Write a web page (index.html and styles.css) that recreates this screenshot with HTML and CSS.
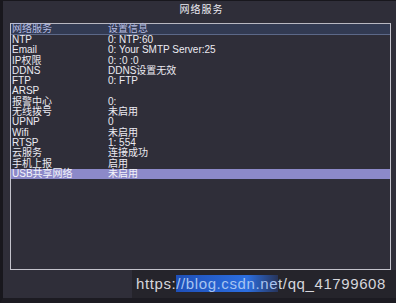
FILE: index.html
```html
<!DOCTYPE html>
<html>
<head>
<meta charset="utf-8">
<link rel="stylesheet" href="styles.css">
</head>
<body>
<div class="screen">
  <div class="title">网络服务</div>
  <div class="panel">
    <div class="row head"><span class="c1">网络服务</span><span class="c2">设置信息</span></div>
    <div class="row"><span class="c1">NTP</span><span class="c2">0: NTP:60</span></div>
    <div class="row"><span class="c1">Email</span><span class="c2">0: Your SMTP Server:25</span></div>
    <div class="row"><span class="c1">IP权限</span><span class="c2">0: :0 :0</span></div>
    <div class="row"><span class="c1">DDNS</span><span class="c2">DDNS设置无效</span></div>
    <div class="row"><span class="c1">FTP</span><span class="c2">0: FTP</span></div>
    <div class="row"><span class="c1">ARSP</span><span class="c2"></span></div>
    <div class="row"><span class="c1">报警中心</span><span class="c2">0:</span></div>
    <div class="row"><span class="c1">无线拨号</span><span class="c2">未启用</span></div>
    <div class="row"><span class="c1">UPNP</span><span class="c2">0</span></div>
    <div class="row"><span class="c1">Wifi</span><span class="c2">未启用</span></div>
    <div class="row"><span class="c1">RTSP</span><span class="c2">1: 554</span></div>
    <div class="row"><span class="c1">云服务</span><span class="c2">连接成功</span></div>
    <div class="row"><span class="c1">手机上报</span><span class="c2">启用</span></div>
    <div class="row sel"><span class="c1">USB共享网络</span><span class="c2">未启用</span></div>
  </div>
  <div class="footer">
    <div class="mark">https:<span class="blue">//blog.csdn.ne</span>t/qq_41799608</div>
  </div>
</div>
</body>
</html>
```
FILE: styles.css
```css
html, body {
  margin: 0;
  padding: 0;
  background: #2f2e39;
}
.screen {
  width: 396px;
  height: 303px;
  box-sizing: border-box;
  border-left: 3px solid #18171d;
  border-top: 1px solid #18171d;
  border-bottom: 5px solid #1c1b22;
  display: flex;
  flex-direction: column;
  font-family: "Noto Sans CJK SC", "Liberation Sans", sans-serif;
  color: #ecebf2;
}
.title {
  height: 22px;
  line-height: 15px;
  text-align: center;
  font-size: 10px;
  letter-spacing: 1px;
  padding-left: 4px;
  box-sizing: border-box;
}
.panel {
  margin: 0 5px 0 7px;
  height: 247px;
  box-sizing: border-box;
  border: 1px solid #c4c3cc;
  border-top-color: #b8b8c2;
}
.row {
  display: flex;
  height: 10.3px;
  line-height: 10.3px;
  font-size: 10px;
  font-family: "Liberation Sans", "Noto Sans CJK SC", sans-serif;
  white-space: nowrap;
}
.row.head {
  height: 11px;
  line-height: 10px;
  background: #323a52;
  border-bottom: 1px solid #5c6888;
  color: #b6bde2;
  box-sizing: border-box;
}
.row.sel {
  background: #8c89c9;
  color: #f4f4fa;
}
.c1 {
  width: 96px;
  padding-left: 1px;
}
.c2 {
  flex: 1;
}
.footer {
  flex: 1;
  display: flex;
  justify-content: flex-end;
  align-items: flex-start;
}
.mark {
  background: #25242b;
  color: #d6d6dc;
  font-family: "Liberation Sans", sans-serif;
  font-size: 15px;
  line-height: 18px;
  padding: 5px 10px 5px 4px;
  letter-spacing: 0.6px;
}
.blue {
  background: linear-gradient(90deg, #1f4fb8, #2c6ee0 70%, rgba(44, 90, 200, 0.3));
  color: #a8c4f0;
}
```
